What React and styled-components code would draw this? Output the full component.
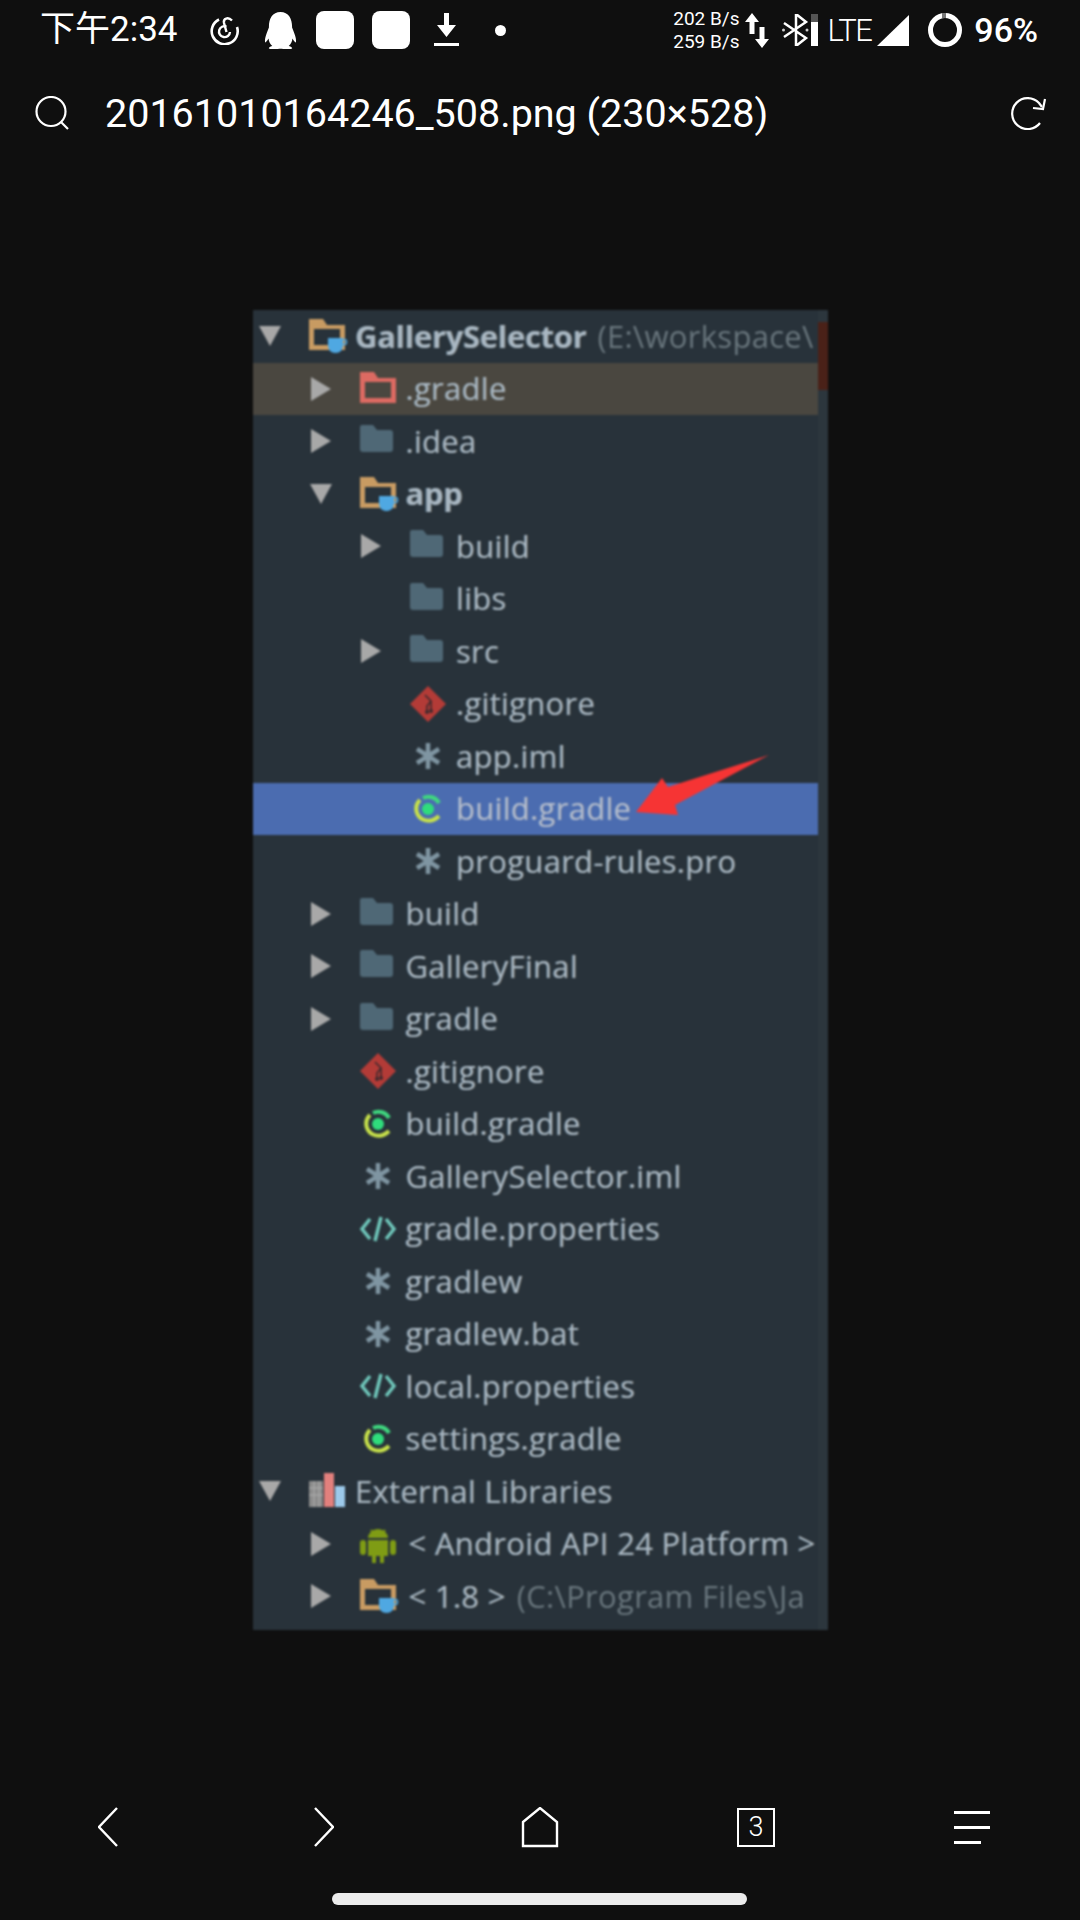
import React from "react";
import styled, { createGlobalStyle } from "styled-components";
import { FaQq } from "react-icons/fa";

const rows = [
  { depth: 0, arrow: "down", icon: "module", label: "GallerySelector", bold: true, hint: "(E:\\workspace\\" },
  { depth: 1, arrow: "right", icon: "excluded", label: ".gradle", tone: "warn" },
  { depth: 1, arrow: "right", icon: "folder", label: ".idea" },
  { depth: 1, arrow: "down", icon: "module", label: "app", bold: true },
  { depth: 2, arrow: "right", icon: "folder", label: "build" },
  { depth: 2, icon: "folder", label: "libs" },
  { depth: 2, arrow: "right", icon: "folder", label: "src" },
  { depth: 2, icon: "git", label: ".gitignore" },
  { depth: 2, icon: "star", label: "app.iml" },
  { depth: 2, icon: "gradle", label: "build.gradle", tone: "selected" },
  { depth: 2, icon: "star", label: "proguard-rules.pro" },
  { depth: 1, arrow: "right", icon: "folder", label: "build" },
  { depth: 1, arrow: "right", icon: "folder", label: "GalleryFinal" },
  { depth: 1, arrow: "right", icon: "folder", label: "gradle" },
  { depth: 1, icon: "git", label: ".gitignore" },
  { depth: 1, icon: "gradle", label: "build.gradle" },
  { depth: 1, icon: "star", label: "GallerySelector.iml" },
  { depth: 1, icon: "xml", label: "gradle.properties" },
  { depth: 1, icon: "star", label: "gradlew" },
  { depth: 1, icon: "star", label: "gradlew.bat" },
  { depth: 1, icon: "xml", label: "local.properties" },
  { depth: 1, icon: "gradle", label: "settings.gradle" },
  { depth: 0, arrow: "down", icon: "library", label: "External Libraries" },
  { depth: 1, arrow: "right", icon: "android", label: "< Android API 24 Platform >", inset: true },
  { depth: 1, arrow: "right", icon: "module", label: "< 1.8 >", hint: "(C:\\Program Files\\Ja", inset: true },
];

const Cup = () => (
  <g fill="#4fa8e2">
    <path d="M19 20h15v7c0 5-3 8-7.500 8S19 32 19 27z" />
    <circle cx="35" cy="24" r="2.500" fill="none" stroke="#4fa8e2" strokeWidth="1.500" />
  </g>
);

const TreeIcon = ({ name }) => {
  switch (name) {
    case "folder":
      return <path d="M0 4q0-2 2-2h11l4 5h13q3 0 3 3v16q0 3-3 3H3q-3 0-3-3z" fill="#4f6876" />;
    case "excluded":
      return (
        <path
          d="M0 1h14l4 6h18v25H0zM5 11v16h26V11z"
          fill="#dc6a62"
          fillRule="evenodd"
        />
      );
    case "module":
      return (
        <>
          <path
            d="M0 1h14l4 6h18v25H0zM5 11v16h26V11z"
            fill="#c89b62"
            fillRule="evenodd"
          />
          <Cup />
        </>
      );
    case "git":
      return (
        <>
          <path d="M18 0l18 18-18 18L0 18z" fill="#b33b37" />
          <g fill="none" stroke="#3d2a2e" strokeWidth="1.600">
            <path d="M15 9l6 6v10" />
            <path d="M21 15l-4 5v6" />
          </g>
          <circle cx="21" cy="25" r="2" fill="#3d2a2e" />
          <circle cx="17" cy="26" r="2" fill="#3d2a2e" />
        </>
      );
    case "star":
      return (
        <g stroke="#7f95a2" strokeWidth="4.500">
          <path d="M18 5v26M7 11l22 14M29 11L7 25" />
        </g>
      );
    case "gradle":
      return (
        <>
          <path d="M29 12A12 12 0 0 0 13 7" fill="none" stroke="#3fd77f" strokeWidth="4" />
          <path d="M10 9a12 12 0 0 0 2 19c6 3 12 2 17-3" fill="none" stroke="#c6e04a" strokeWidth="4" />
          <circle cx="18" cy="18" r="6" fill="#2fdc7c" />
        </>
      );
    case "xml":
      return (
        <g fill="none" stroke="#6fc7bb" strokeWidth="3.500">
          <path d="M10 8L2 18l8 10M26 8l8 10-8 10M21 6l-6 24" />
        </g>
      );
    case "library":
      return (
        <>
          <rect x="0" y="8" width="14" height="26" fill="#8a8a8a" />
          <path d="M0 15h14M0 22h14M5 8v26M10 8v26" stroke="#a6a6a6" strokeWidth="1.500" />
          <rect x="15" y="0" width="10" height="34" fill="#e2807d" />
          <rect x="26" y="13" width="10" height="21" fill="#9cc9ea" />
        </>
      );
    case "android":
      return (
        <g fill="#7f9c14">
          <path d="M8 12a10 9 0 0 1 20 0z" />
          <path d="M11 4l3 4M25 4l-3 4" stroke="#7f9c14" strokeWidth="2" />
          <path d="M8 14h20v16h-4v7h-4v-7h-4v7h-4v-7H8z" />
          <rect x="0" y="14" width="6" height="15" rx="3" />
          <rect x="30" y="14" width="6" height="15" rx="3" />
        </g>
      );
    default:
      return null;
  }
};

const App = () => (
  <Page>
    <GlobalStyle />
    <StatusBar>
      <StatusGroup>
        <Clock>下午2:34</Clock>
        <IconSvg $offset={32} width="30" height="30" viewBox="0 0 30 30">
          <g fill="none" stroke="#fff">
            <path d="M9 4.500A13 13 0 1 0 27 12" strokeWidth="2.600" />
            <path d="M22 5.500C18 1.500 13 3.500 14 8l2.500 9" strokeWidth="2.400" />
            <path d="M16.500 11.500A5.500 5.500 0 1 0 20 17" strokeWidth="2.400" />
          </g>
        </IconSvg>
        <QqIcon size={37} />
        <NoticeSquare $offset={17} />
        <NoticeSquare $offset={18} />
        <IconSvg $offset={24} width="25" height="34" viewBox="0 0 25 34">
          <path d="M10 0h5v12h7L12.500 24 3 12h7zM0 30h25v3H0z" fill="#fff" />
        </IconSvg>
        <Dot />
      </StatusGroup>
      <StatusGroup>
        <Speeds>
          <span>202 B/s</span>
          <span>259 B/s</span>
        </Speeds>
        <IconSvg $offset={6} width="24" height="35" viewBox="0 0 24 35">
          <path d="M7 0l7 9H9.500v12h-5V9H0zM17 35l-7-9h4.500V14h5v12H24z" fill="#fff" />
        </IconSvg>
        <IconSvg $offset={13} width="36" height="32" viewBox="0 0 36 32">
          <path d="M2 9l22 15-10 8V0l10 8L2 23" fill="none" stroke="#fff" strokeWidth="2.500" />
          <circle cx="1.500" cy="16" r="1.500" fill="#ccc" />
          <circle cx="25" cy="16" r="1.500" fill="#ccc" />
          <rect x="29" y="0" width="7" height="32" fill="#fff" />
          <rect x="29" y="0" width="7" height="8" fill="#555" />
        </IconSvg>
        <NetworkLabel>LTE</NetworkLabel>
        <IconSvg $offset={6} width="32" height="31" viewBox="0 0 32 31">
          <path d="M32 0v31H0z" fill="#fff" />
        </IconSvg>
        <IconSvg $offset={19} width="34" height="34" viewBox="0 0 34 34">
          <circle cx="17" cy="17" r="14.500" fill="none" stroke="#fff" strokeWidth="5" />
          <path d="M14 0h4v5h-4z" fill="#777" />
        </IconSvg>
        <Battery>96%</Battery>
      </StatusGroup>
    </StatusBar>

    <AddressBar>
      <IconSvg width="34" height="34" viewBox="0 0 34 34">
        <circle cx="16" cy="15.500" r="14.500" fill="none" stroke="#fff" strokeWidth="2.200" />
        <path d="M26 26l7 7" stroke="#fff" strokeWidth="2.200" />
      </IconSvg>
      <AddressText>20161010164246_508.png (230×528)</AddressText>
      <IconSvg width="38" height="33" viewBox="0 0 38 33">
        <path d="M31 26a15.500 15.500 0 1 1-1-20l3 4" fill="none" stroke="#fff" strokeWidth="2.200" />
        <path d="M36 2l-2 10-10-1" fill="none" stroke="#fff" strokeWidth="2.200" />
      </IconSvg>
    </AddressBar>

    <Viewer>
      <Shot>
        <Tree>
          {rows.map((row, index) => (
            <Row key={index} $depth={row.depth} $tone={row.tone}>
              <ArrowSlot>{row.arrow && <Caret $dir={row.arrow} />}</ArrowSlot>
              <RowIcon width="36" height="36" viewBox="0 0 36 36">
                <TreeIcon name={row.icon} />
              </RowIcon>
              <Label $bold={row.bold} $tone={row.tone} $inset={row.inset}>
                {row.label}
              </Label>
              {row.hint && <Hint>{row.hint}</Hint>}
            </Row>
          ))}
        </Tree>
        <Scrollbar>
          <Thumb />
        </Scrollbar>
        <RedArrow width="134" height="61" viewBox="0 0 134 61">
          <path d="M0 57L26 23l6 9L133 0 39 50l3 10z" fill="#f63434" />
        </RedArrow>
      </Shot>
    </Viewer>

    <BottomBar>
      <NavCell>
        <IconSvg width="20" height="40" viewBox="0 0 20 40">
          <path d="M19 1L1 20l18 19" fill="none" stroke="#fff" strokeWidth="2.400" />
        </IconSvg>
      </NavCell>
      <NavCell>
        <IconSvg width="20" height="40" viewBox="0 0 20 40">
          <path d="M1 1l18 19L1 39" fill="none" stroke="#fff" strokeWidth="2.400" />
        </IconSvg>
      </NavCell>
      <NavCell>
        <IconSvg width="38" height="41" viewBox="0 0 38 41">
          <path d="M2 15L19 1l17 14v24H2z" fill="none" stroke="#fff" strokeWidth="2.400" />
        </IconSvg>
      </NavCell>
      <NavCell>
        <TabCount>3</TabCount>
      </NavCell>
      <NavCell>
        <MenuLines>
          <MenuLine $width={36} />
          <MenuLine $width={36} />
          <MenuLine $width={27} />
        </MenuLines>
      </NavCell>
    </BottomBar>
    <HomeArea>
      <HomeIndicator />
    </HomeArea>
  </Page>
);

export default App;

// CSS

const GlobalStyle = createGlobalStyle`
  html, body {
    margin: 0;
    padding: 0;
    background: #0f0f0f;
  }
`;

const Page = styled.div`
  width: 1080px;
  height: 1920px;
  display: flex;
  flex-direction: column;
  background: #0f0f0f;
  color: #fff;
  font-family: Roboto, "Noto Sans CJK SC", sans-serif;
  overflow: hidden;
`;

const StatusBar = styled.div`
  height: 60px;
  display: flex;
  align-items: center;
  justify-content: space-between;
  padding: 0 42px 0 40px;
`;

const StatusGroup = styled.div`
  display: flex;
  align-items: center;
`;

const Clock = styled.span`
  font-size: 35px;
  line-height: 40px;
`;

const IconSvg = styled.svg`
  display: block;
  flex: none;
  margin-left: ${(p) => p.$offset || 0}px;
`;

const QqIcon = styled(FaQq)`
  flex: none;
  margin-left: 22px;
`;

const NoticeSquare = styled.div`
  width: 38px;
  height: 38px;
  border-radius: 8px;
  background: #fff;
  margin-left: ${(p) => p.$offset}px;
`;

const Dot = styled.div`
  width: 11px;
  height: 11px;
  border-radius: 50%;
  background: #fff;
  margin-left: 36px;
`;

const Speeds = styled.div`
  display: flex;
  flex-direction: column;
  font-size: 19px;
  line-height: 23px;
`;

const NetworkLabel = styled.span`
  font-size: 31px;
  font-weight: 300;
  letter-spacing: -1.500px;
  margin-left: 9px;
`;

const Battery = styled.span`
  font-size: 34px;
  font-weight: 500;
  margin-left: 12px;
`;

const AddressBar = styled.div`
  height: 106px;
  display: flex;
  align-items: center;
  padding: 0 33px 0 35px;
`;

const AddressText = styled.div`
  flex: 1;
  font-size: 39.500px;
  margin-left: 36px;
  white-space: nowrap;
`;

const Viewer = styled.div`
  flex: 1;
  display: flex;
  align-items: center;
  justify-content: center;
  padding-left: 1px;
`;

const Shot = styled.div`
  position: relative;
  width: 575px;
  height: 1320px;
  display: flex;
  background: #28323a;
  filter: blur(0.8px);
  overflow: hidden;
`;

const Tree = styled.div`
  flex: 1;
  min-width: 0;
  display: flex;
  flex-direction: column;
`;

const Scrollbar = styled.div`
  width: 10px;
  background: #2c363d;
  padding-top: 12px;
`;

const Thumb = styled.div`
  height: 68px;
  background: #4a2118;
`;

const Row = styled.div`
  height: 52.500px;
  flex: none;
  display: flex;
  align-items: center;
  padding-left: ${(p) => 7 + p.$depth * 50.5}px;
  background: ${(p) =>
    p.$tone === "warn" ? "#4a4740" : p.$tone === "selected" ? "#4b6cb0" : "transparent"};
  white-space: nowrap;
  overflow: hidden;
  font-family: "Open Sans", sans-serif;
  font-size: 31px;
  letter-spacing: 0.3px;
`;

const ArrowSlot = styled.div`
  width: 20px;
  margin-right: 29px;
  flex: none;
  display: flex;
  justify-content: center;
`;

const Caret = styled.div`
  width: 0;
  height: 0;
  ${(p) =>
    p.$dir === "down"
      ? `
    border-left: 11px solid transparent;
    border-right: 11px solid transparent;
    border-top: 20px solid #a8a8a8;
  `
      : `
    border-top: 12px solid transparent;
    border-bottom: 12px solid transparent;
    border-left: 20px solid #a8a8a8;
  `}
`;

const RowIcon = styled.svg`
  flex: none;
  margin-right: 10px;
  overflow: visible;
`;

const Label = styled.span`
  color: ${(p) => (p.$tone === "selected" ? "#b3bcce" : "#a9b7c2")};
  font-weight: ${(p) => (p.$bold ? 700 : 400)};
  letter-spacing: ${(p) => (p.$bold ? "-0.3px" : "inherit")};
  padding-bottom: 1px;
  margin-left: ${(p) => (p.$inset ? 3 : 0)}px;
  text-shadow: 0.8px 0 rgba(200, 150, 90, 0.3), -0.8px 0 rgba(90, 170, 230, 0.3);
`;

const Hint = styled.span`
  color: #69767d;
  margin-left: 11px;
  padding-bottom: 1px;
`;

const RedArrow = styled.svg`
  position: absolute;
  left: 383px;
  top: 445px;
`;

const BottomBar = styled.div`
  height: 106px;
  display: flex;
`;

const NavCell = styled.div`
  width: 216px;
  display: flex;
  align-items: center;
  justify-content: center;
`;

const TabCount = styled.div`
  width: 38px;
  height: 39px;
  box-sizing: border-box;
  border: 2px solid #fff;
  font-size: 27px;
  font-weight: 300;
  line-height: 35px;
  text-align: center;
`;

const MenuLines = styled.div`
  width: 36px;
  display: flex;
  flex-direction: column;
  gap: 12px;
`;

const MenuLine = styled.div`
  width: ${(p) => p.$width}px;
  height: 3px;
  background: #fff;
`;

const HomeArea = styled.div`
  height: 40px;
  padding: 13px 1px 0 0;
  box-sizing: border-box;
  display: flex;
  justify-content: center;
`;

const HomeIndicator = styled.div`
  width: 415px;
  height: 12px;
  border-radius: 6px;
  background: #ececec;
`;
